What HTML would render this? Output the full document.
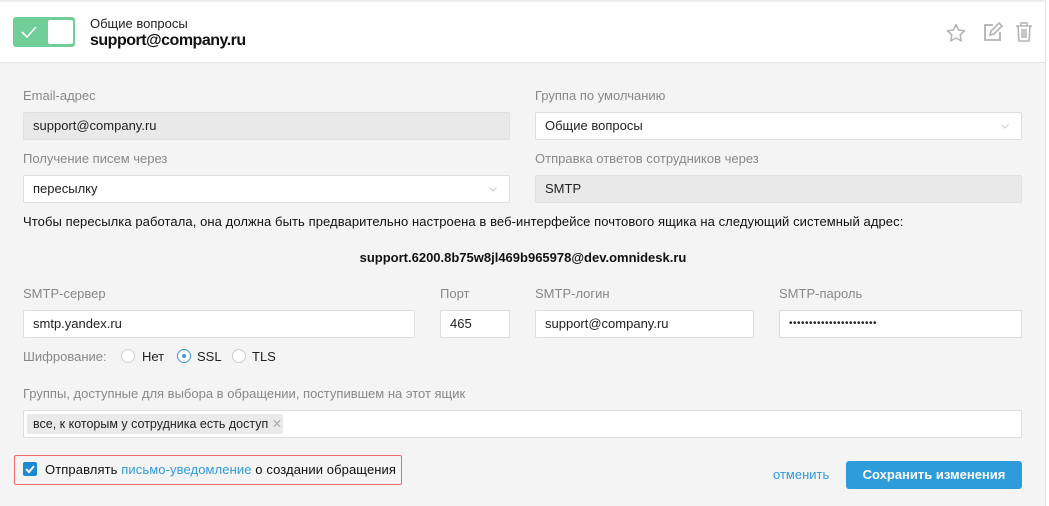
<!DOCTYPE html>
<html><head><meta charset="utf-8"><style>
*{box-sizing:border-box;margin:0;padding:0}
body{width:1049px;height:506px;background:#fff;font-family:"Liberation Sans",Arial,sans-serif;position:relative;overflow:hidden;font-size:13px;color:#222}
.a{position:absolute;white-space:nowrap}
.hd{position:absolute;left:0;top:0;width:1046px;height:63px;background:#fff;border-top:2px solid #eee;border-bottom:1px solid #e3e3e3;border-right:1px solid #e3e3e3}
.bd{position:absolute;left:0;top:63px;width:1046px;height:443px;background:#f4f4f4;border-right:1px solid #e3e3e3}
.lb{color:#888;font-size:13px}
.in{position:absolute;height:28px;border:1px solid #ddd;background:#fff;border-radius:2px;padding:0 9px;line-height:26px;font-size:13px;color:#222}
.dis{background:#e9e9e9;border-color:#e0e0e0}
.ch{position:absolute;right:12px;top:11px}
.rd{position:absolute;width:14px;height:14px;border:1px solid #ccc;border-radius:50%;background:#fff}
</style></head><body>
<div class="hd"></div>
<div class="bd"></div>
<div class="a" style="left:13px;top:17px;width:62px;height:30px;background:#70cf98;border-radius:3px"></div>
<div class="a" style="left:48px;top:20px;width:25px;height:24px;background:#fff;border-radius:2px"></div>
<svg class="a" style="left:20px;top:25px" width="18" height="14"><path d="M2 7l5 5 9-10" stroke="#fff" stroke-width="1.6" fill="none"/></svg>
<div class="a" style="left:90px;top:16px;font-size:13px;color:#222">Общие вопросы</div>
<div class="a" style="left:90px;top:32px;font-size:16px;font-weight:bold;color:#111;letter-spacing:-0.5px">support@company.ru</div>
<svg class="a" style="left:945px;top:22px" width="22" height="22"><path d="M11 2.5l2.6 5.6 6 .7-4.5 4.1 1.2 6L11 16l-5.3 2.9 1.2-6L2.4 8.8l6-.7z" fill="none" stroke="#b3b3b3" stroke-width="1.5" stroke-linejoin="round"/></svg>
<svg class="a" style="left:981px;top:21px" width="22" height="22"><path d="M12 4H4v15h15v-8" fill="none" stroke="#b3b3b3" stroke-width="1.8"/><path d="M9 14l1-4 8-8 3 3-8 8z" fill="none" stroke="#b3b3b3" stroke-width="1.6"/></svg>
<svg class="a" style="left:1015px;top:21px" width="18" height="22"><path d="M1 5h16M6 5V2h6v3M3 5l1 15h10l1-15M7 8v9M9 8v9M11 8v9" fill="none" stroke="#b3b3b3" stroke-width="1.5"/></svg>

<div class="a lb" style="left:23px;top:88px">Email-адрес</div>
<div class="a lb" style="left:535px;top:88px">Группа по умолчанию</div>
<div class="in dis" style="left:23px;top:112px;width:487px">support@company.ru</div>
<div class="in" style="left:535px;top:112px;width:487px">Общие вопросы<svg class="ch" width="8" height="5"><path d="M.5.5l3.5 3.5 3.5-3.5" stroke="#ccc" fill="none"/></svg></div>
<div class="a lb" style="left:23px;top:151px">Получение писем через</div>
<div class="a lb" style="left:535px;top:151px">Отправка ответов сотрудников через</div>
<div class="in" style="left:23px;top:175px;width:487px">пересылку<svg class="ch" width="8" height="5"><path d="M.5.5l3.5 3.5 3.5-3.5" stroke="#ccc" fill="none"/></svg></div>
<div class="in dis" style="left:535px;top:175px;width:487px">SMTP</div>
<div class="a" style="left:23px;top:214px;color:#111;letter-spacing:0.08px">Чтобы пересылка работала, она должна быть предварительно настроена в веб-интерфейсе почтового ящика на следующий системный адрес:</div>
<div class="a" style="left:0;width:1046px;text-align:center;top:250px;font-weight:bold;color:#111">support.6200.8b75w8jl469b965978@dev.omnidesk.ru</div>
<div class="a lb" style="left:23px;top:286px">SMTP-сервер</div>
<div class="a lb" style="left:440px;top:286px">Порт</div>
<div class="a lb" style="left:535px;top:286px">SMTP-логин</div>
<div class="a lb" style="left:779px;top:286px">SMTP-пароль</div>
<div class="in" style="left:23px;top:310px;width:392px">smtp.yandex.ru</div>
<div class="in" style="left:440px;top:310px;width:70px">465</div>
<div class="in" style="left:535px;top:310px;width:219px">support@company.ru</div>
<div class="in" style="left:779px;top:310px;width:243px;font-size:10px;letter-spacing:0.5px">••••••••••••••••••••••</div>
<div class="a lb" style="left:23px;top:349px">Шифрование:</div>
<div class="rd" style="left:121px;top:349px"></div><div class="a" style="left:142px;top:349px">Нет</div>
<div class="rd" style="left:177px;top:349px;border-color:#3a9ad9"><div style="width:4px;height:4px;background:#3a9ad9;border-radius:50%;margin:4px"></div></div><div class="a" style="left:197px;top:349px">SSL</div>
<div class="rd" style="left:232px;top:349px"></div><div class="a" style="left:252px;top:349px">TLS</div>
<div class="a lb" style="left:23px;top:386px">Группы, доступные для выбора в обращении, поступившем на этот ящик</div>
<div class="in" style="left:23px;top:410px;width:999px;padding:0"></div>
<div class="a" style="left:27px;top:414px;height:20px;width:256px;background:#eaeaea;border-radius:2px;padding:0 6px;line-height:20px;font-size:12.5px;color:#222">все, к которым у сотрудника есть доступ <span style="color:#aaa">✕</span></div>
<div class="a" style="left:14px;top:455px;width:388px;height:30px;border:1.5px solid #ee6b6e;border-radius:2px"></div>
<div class="a" style="left:23px;top:462px;width:14px;height:14px;background:#1b8ad3;border-radius:2px"></div>
<svg class="a" style="left:24px;top:463px" width="12" height="12"><path d="M2 6l3 3 5-6" stroke="#fff" stroke-width="2" fill="none"/></svg>
<div class="a" style="left:45px;top:462px;color:#111;letter-spacing:0.1px">Отправлять <span style="color:#2e9cdb">письмо-уведомление</span> о создании обращения</div>
<div class="a" style="left:773px;top:467px;color:#2e9cdb">отменить</div>
<div class="a" style="left:846px;top:461px;width:176px;height:28px;background:#2e9cdb;border-radius:3px;color:#fff;font-weight:bold;text-align:center;line-height:28px">Сохранить изменения</div>
</body></html>
